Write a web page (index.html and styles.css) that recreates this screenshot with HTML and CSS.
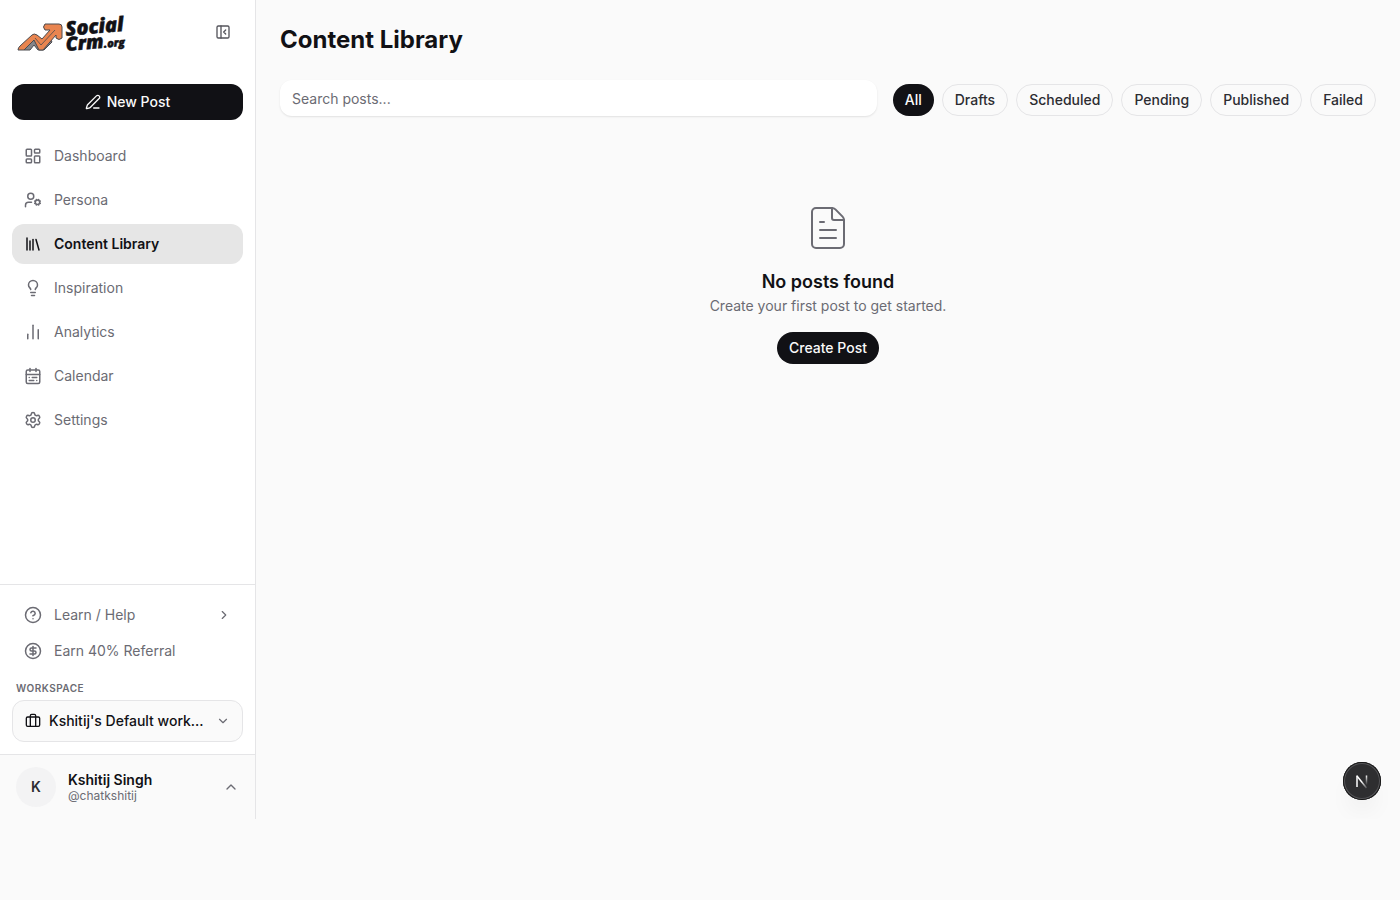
FILE: index.html
```html
<!DOCTYPE html>
<html lang="en">
<head>
    <meta charset="UTF-8">
    <meta name="viewport" content="width=device-width, initial-scale=1.0">
    <title>Content Library</title>
    <link rel="stylesheet" href="styles.css">
</head>
<body>
    <div class="app">
        <aside class="sidebar">
            <div class="sidebar-header">
                <a href="#" class="logo">
                    <svg width="120" height="48" viewBox="0 0 120 48" role="img" aria-label="SocialCrm.org">
                        <g stroke="#4a4a4e" stroke-width="1" stroke-linejoin="round">
                            <path fill="#85858a" d="M8 42 L18 30 Q20 29 22 31 L26 37 L34 30 L36 34 L28 42 L22 42 L18 37 L14 42 Z"/>
                            <path fill="#e98550" d="M2 42 Q2 40 4 38 L16 27 Q18 25 21 27 L26 31 L34 22 L29 22 Q26 19 29 16 L43 16 Q46 16 46 19 L46 30 Q43 33 40 30 L40 27 L27 42 L23 42 L18 32 L8 42 Z"/>
                            <path fill="none" stroke-width="0.8" d="M19 30 L25 37 L39 22"/>
                        </g>
                        <g class="logo-text" transform="rotate(-5 50 28)">
                            <text x="50" y="28" font-size="20">Social</text>
                            <text x="49" y="43" font-size="19">Crm<tspan font-size="11">.org</tspan></text>
                        </g>
                    </svg>
                </a>
                <button type="button" class="collapse-btn" aria-label="Collapse sidebar">
                    <svg class="icon icon-sm" viewBox="0 0 24 24"><rect x="3" y="3" width="18" height="18" rx="2"/><path d="M9 3v18"/><path d="m16 15-3-3 3-3"/></svg>
                </button>
            </div>

            <button type="button" class="new-post">
                <svg class="icon icon-sm" viewBox="0 0 24 24"><path d="M13 21h8"/><path d="M21.174 6.812a1 1 0 0 0-3.986-3.987L3.842 16.174a2 2 0 0 0-.5.83l-1.321 4.352a.5.5 0 0 0 .623.622l4.353-1.32a2 2 0 0 0 .83-.497z"/></svg>
                New Post
            </button>

            <nav class="nav">
                <a href="#" class="nav-item">
                    <svg class="icon" viewBox="0 0 24 24"><rect x="3" y="3" width="7" height="9" rx="1"/><rect x="14" y="3" width="7" height="5" rx="1"/><rect x="14" y="12" width="7" height="9" rx="1"/><rect x="3" y="16" width="7" height="5" rx="1"/></svg>
                    Dashboard
                </a>
                <a href="#" class="nav-item">
                    <svg class="icon" viewBox="0 0 24 24"><path d="M10 15H6a4 4 0 0 0-4 4v2"/><path d="m14.305 16.53.923-.382"/><path d="m15.228 13.852-.923-.383"/><path d="m16.852 12.228-.383-.923"/><path d="m16.852 17.772-.383.924"/><path d="m19.148 12.228.383-.923"/><path d="m19.53 18.696-.382-.924"/><path d="m20.772 13.852.924-.383"/><path d="m20.772 16.148.924.383"/><circle cx="18" cy="15" r="3"/><circle cx="9" cy="7" r="4"/></svg>
                    Persona
                </a>
                <a href="#" class="nav-item active" aria-current="page">
                    <svg class="icon" viewBox="0 0 24 24"><path d="m16 6 4 14"/><path d="M12 6v14"/><path d="M8 8v12"/><path d="M4 4v16"/></svg>
                    Content Library
                </a>
                <a href="#" class="nav-item">
                    <svg class="icon" viewBox="0 0 24 24"><path d="M15 14c.2-1 .7-1.7 1.5-2.5 1-.9 1.5-2.2 1.5-3.5A6 6 0 0 0 6 8c0 1 .2 2.2 1.5 3.5.7.7 1.3 1.5 1.5 2.5"/><path d="M9 18h6"/><path d="M10 22h4"/></svg>
                    Inspiration
                </a>
                <a href="#" class="nav-item">
                    <svg class="icon" viewBox="0 0 24 24"><path d="M5 21v-6"/><path d="M12 21V3"/><path d="M19 21V9"/></svg>
                    Analytics
                </a>
                <a href="#" class="nav-item">
                    <svg class="icon" viewBox="0 0 24 24"><rect x="3" y="4" width="18" height="18" rx="2"/><path d="M16 2v4"/><path d="M3 10h18"/><path d="M8 2v4"/><path d="M17 14h-6"/><path d="M13 18H7"/><path d="M7 14h.01"/><path d="M17 18h.01"/></svg>
                    Calendar
                </a>
                <a href="#" class="nav-item">
                    <svg class="icon" viewBox="0 0 24 24"><path d="M9.671 4.136a2.34 2.34 0 0 1 4.659 0 2.34 2.34 0 0 0 3.319 1.915 2.34 2.34 0 0 1 2.33 4.033 2.34 2.34 0 0 0 0 3.831 2.34 2.34 0 0 1-2.33 4.033 2.34 2.34 0 0 0-3.319 1.915 2.34 2.34 0 0 1-4.659 0 2.34 2.34 0 0 0-3.32-1.915 2.34 2.34 0 0 1-2.33-4.033 2.34 2.34 0 0 0 0-3.831A2.34 2.34 0 0 1 6.35 6.051a2.34 2.34 0 0 0 3.319-1.915"/><circle cx="12" cy="12" r="3"/></svg>
                    Settings
                </a>
            </nav>

            <div class="sidebar-bottom">
                <a href="#" class="nav-item small">
                    <svg class="icon" viewBox="0 0 24 24"><circle cx="12" cy="12" r="10"/><path d="M9.09 9a3 3 0 0 1 5.83 1c0 2-3 3-3 3"/><path d="M12 17h.01"/></svg>
                    <span class="grow">Learn / Help</span>
                    <svg class="icon icon-xs" viewBox="0 0 24 24"><path d="m9 18 6-6-6-6"/></svg>
                </a>
                <a href="#" class="nav-item small">
                    <svg class="icon" viewBox="0 0 24 24"><circle cx="12" cy="12" r="10"/><path d="M16 8h-6a2 2 0 1 0 0 4h4a2 2 0 1 1 0 4H8"/><path d="M12 18V6"/></svg>
                    Earn 40% Referral
                </a>
                <label for="workspace" class="workspace-label">WORKSPACE</label>
                <div class="workspace">
                    <svg class="icon icon-sm" viewBox="0 0 24 24"><path d="M16 20V4a2 2 0 0 0-2-2h-4a2 2 0 0 0-2 2v16"/><rect x="2" y="6" width="20" height="14" rx="2"/></svg>
                    <select id="workspace">
                        <option>Kshitij's Default workspace</option>
                    </select>
                    <svg class="icon icon-xs chevron" viewBox="0 0 24 24"><path d="m6 9 6 6 6-6"/></svg>
                </div>
            </div>

            <button type="button" class="user">
                <span class="avatar">K</span>
                <span class="user-info">
                    <span class="user-name">Kshitij Singh</span>
                    <span class="user-handle">@chatkshitij</span>
                </span>
                <svg class="icon icon-sm" viewBox="0 0 24 24"><path d="m18 15-6-6-6 6"/></svg>
            </button>
        </aside>

        <main class="main">
            <h1>Content Library</h1>

            <div class="toolbar">
                <input type="search" class="search" placeholder="Search posts..." aria-label="Search posts">
                <div class="filters">
                    <button type="button" class="pill selected">All</button>
                    <button type="button" class="pill">Drafts</button>
                    <button type="button" class="pill">Scheduled</button>
                    <button type="button" class="pill">Pending</button>
                    <button type="button" class="pill">Published</button>
                    <button type="button" class="pill">Failed</button>
                </div>
            </div>

            <section class="empty">
                <svg class="icon empty-icon" viewBox="0 0 24 24"><path d="M6 22a2 2 0 0 1-2-2V4a2 2 0 0 1 2-2h8a2.4 2.4 0 0 1 1.704.706l3.588 3.588A2.4 2.4 0 0 1 20 8v12a2 2 0 0 1-2 2z"/><path d="M14 2v5a1 1 0 0 0 1 1h5"/><path d="M10 9H8"/><path d="M16 13H8"/><path d="M16 17H8"/></svg>
                <h2>No posts found</h2>
                <p>Create your first post to get started.</p>
                <button type="button" class="create-post">Create Post</button>
            </section>
        </main>

        <button type="button" class="dev-badge" aria-label="Open dev tools">
            <svg width="38" height="38" viewBox="0 0 38 38" fill="none">
                <defs>
                    <linearGradient id="stem" x1="0" y1="13" x2="0" y2="23" gradientUnits="userSpaceOnUse">
                        <stop offset="0" stop-color="#fff"/>
                        <stop offset="1" stop-color="#fff" stop-opacity="0"/>
                    </linearGradient>
                    <linearGradient id="slash" x1="19" y1="19" x2="25" y2="27" gradientUnits="userSpaceOnUse">
                        <stop offset="0" stop-color="#fff"/>
                        <stop offset="1" stop-color="#fff" stop-opacity="0"/>
                    </linearGradient>
                </defs>
                <path d="M14 14L23.500 26" stroke="url(#slash)" stroke-width="1.500"/>
                <path d="M14 25V13.500" stroke="#fff" stroke-width="1.500"/>
                <path d="M23.500 13.500v10" stroke="url(#stem)" stroke-width="1.500"/>
            </svg>
        </button>
    </div>
</body>
</html>
```
FILE: styles.css
```css
* {
    box-sizing: border-box;
}

body {
    margin: 0;
    font-family: Inter, "Liberation Sans", sans-serif;
    font-size: 14px;
    line-height: 20px;
    background-color: #fafafa;
    color: #111115;
}

button, input, select {
    font: inherit;
    color: inherit;
}

button {
    cursor: pointer;
}

a {
    color: inherit;
    text-decoration: none;
}

.app {
    position: relative;
    display: flex;
    min-height: 91vh;
}

.icon {
    width: 18px;
    height: 18px;
    flex-shrink: 0;
    fill: none;
    stroke: currentColor;
    stroke-width: 2;
    stroke-linecap: round;
    stroke-linejoin: round;
}

.icon-sm {
    width: 16px;
    height: 16px;
}

.icon-xs {
    width: 14px;
    height: 14px;
}

/* Sidebar */
.sidebar {
    display: flex;
    flex-direction: column;
    width: 256px;
    flex-shrink: 0;
    background-color: #ffffff;
    border-right: 1px solid #e5e5e7;
}

.sidebar-header {
    display: flex;
    align-items: center;
    justify-content: space-between;
    height: 64px;
    padding: 0 16px;
}

.logo svg {
    display: block;
    overflow: visible;
}

.logo-text {
    font-family: "Open Sans", sans-serif;
    font-style: italic;
    font-weight: 800;
    fill: #111115;
    stroke: #111115;
    stroke-width: 0.5;
}

.collapse-btn {
    display: flex;
    padding: 8px;
    border: none;
    background: none;
    color: #55555c;
}

.new-post {
    display: flex;
    align-items: center;
    justify-content: center;
    gap: 6px;
    height: 36px;
    margin: 20px 12px 16px;
    border: none;
    border-radius: 12px;
    background-color: #111115;
    color: #fafafa;
    font-weight: 500;
}

.nav {
    display: flex;
    flex-direction: column;
    flex: 1;
    gap: 4px;
    padding: 0 12px;
}

.nav-item {
    display: flex;
    align-items: center;
    gap: 12px;
    height: 40px;
    padding: 0 12px;
    border-radius: 12px;
    color: #6b6b73;
}

.nav-item.small {
    height: 36px;
}

.nav-item.active {
    background-color: #e6e6e6;
    color: #111115;
    font-weight: 600;
}

.grow {
    flex: 1;
}

.sidebar-bottom {
    padding: 12px;
    border-top: 1px solid #e5e5e7;
}

.workspace-label {
    display: block;
    margin: 12px 4px 4px;
    font-size: 10px;
    line-height: 15px;
    font-weight: 600;
    letter-spacing: 0.5px;
    color: #6b6b73;
}

.workspace {
    display: flex;
    align-items: center;
    gap: 8px;
    height: 42px;
    padding: 0 12px;
    border: 1px solid #e5e5e7;
    border-radius: 12px;
    background-color: #fafafa;
}

.workspace select {
    flex: 1;
    min-width: 0;
    padding: 0;
    border: none;
    background: none;
    appearance: none;
    font-weight: 500;
    overflow: hidden;
    text-overflow: ellipsis;
    white-space: nowrap;
}

.chevron {
    color: #6b6b73;
}

.user {
    display: flex;
    align-items: center;
    gap: 12px;
    padding: 12px 16px;
    border: none;
    border-top: 1px solid #e5e5e7;
    background-color: #fafafa;
    text-align: left;
}

.user .icon {
    color: #6b6b73;
}

.avatar {
    display: flex;
    align-items: center;
    justify-content: center;
    width: 40px;
    height: 40px;
    border-radius: 50%;
    background-color: #f3f3f4;
    color: #2c2c31;
    font-weight: 600;
}

.user-info {
    display: flex;
    flex-direction: column;
    flex: 1;
}

.user-name {
    line-height: 18px;
    font-weight: 600;
}

.user-handle {
    font-size: 12px;
    line-height: 14px;
    color: #6b6b73;
}

/* Main area */
.main {
    flex: 1;
    min-width: 0;
    padding: 24px;
}

h1 {
    margin: 0 0 24px;
    font-size: 24px;
    line-height: 32px;
    font-weight: 700;
}

.toolbar {
    display: flex;
    align-items: flex-end;
    gap: 16px;
}

.search {
    flex: 1;
    min-width: 0;
    height: 36px;
    padding: 0 12px;
    border: none;
    border-radius: 12px;
    background-color: #ffffff;
    box-shadow: 0 1px 2px rgba(0, 0, 0, 0.1);
    appearance: none;
}

.search::placeholder {
    color: #6b6b73;
}

.filters {
    display: flex;
    gap: 8px;
}

.pill {
    height: 32px;
    padding: 0 12px;
    border: 1px solid #e5e5e7;
    border-radius: 16px;
    background-color: transparent;
    color: #2c2c31;
    font-weight: 500;
}

.pill.selected {
    border: none;
    background-color: #111115;
    color: #fafafa;
}

.empty {
    display: flex;
    flex-direction: column;
    align-items: center;
    padding: 88px 0 64px;
    text-align: center;
}

.empty-icon {
    width: 48px;
    height: 48px;
    stroke-width: 1;
    color: #6b6b73;
}

.empty h2 {
    margin: 16px 0 0;
    font-size: 18px;
    line-height: 28px;
    font-weight: 600;
}

.empty p {
    margin: 0 0 16px;
    color: #6b6b73;
}

.create-post {
    height: 32px;
    padding: 0 12px;
    border: none;
    border-radius: 16px;
    background-color: #111115;
    color: #fafafa;
    font-weight: 500;
}

/* Floats over the page corner */
.dev-badge {
    position: absolute;
    right: 19px;
    bottom: 19px;
    display: flex;
    padding: 0;
    border: none;
    border-radius: 50%;
    background-color: #2e2e30;
    box-shadow: inset 0 0 0 1px #161616, inset 0 0 0 2px #555558, 0 16px 24px -8px rgba(0, 0, 0, 0.08);
}
```
